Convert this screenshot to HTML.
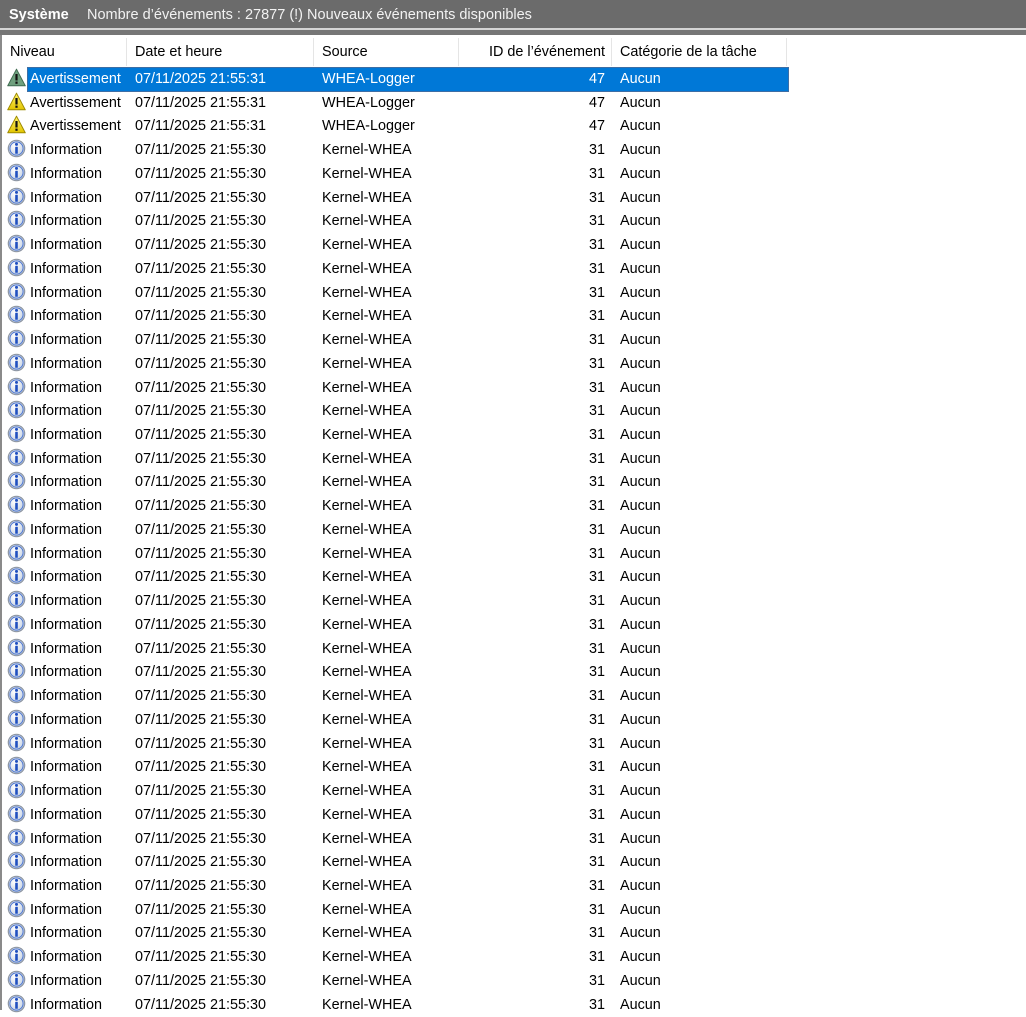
<!DOCTYPE html>
<html><head><meta charset="utf-8"><style>
*{margin:0;padding:0;box-sizing:border-box}
body{width:1026px;height:1010px;overflow:hidden;background:#fff;font-family:"Liberation Sans",sans-serif;font-size:14.4px;color:#000;position:relative}
#bar{position:absolute;left:0;top:0;width:1026px;height:28px;background:#6b6b6b;color:#fff;line-height:30px;font-size:14.5px}
#bar b{position:absolute;left:9px}
#bar span{position:absolute;left:87px;color:#f2f2f2}
#l1{position:absolute;top:28px;left:0;width:1026px;height:2px;background:#d4d4d4}
#l2{position:absolute;top:30px;left:0;width:1026px;height:5px;background:#767676}
#lb{position:absolute;top:35px;left:0;width:2px;height:975px;background:#8a8a8a}
#hd{position:absolute;top:38px;left:2px;height:28px;width:1024px}
.hc{position:absolute;top:0;height:28px;line-height:29px;border-right:1px solid #e5e5e5;padding-left:8px}
#rows{position:absolute;top:67px;left:2px;width:1024px}
.r{position:relative;height:23.74px;line-height:23.74px;white-space:nowrap}
.r span{position:absolute;top:1px}
.a{left:28px}.d{left:133px}.s{left:320px}.i{left:440px;width:163px;text-align:right}.c{left:618px}
.ic{position:absolute;left:5px;top:1px;width:19px;height:19px}
.sel::before{content:"";position:absolute;left:25px;top:0;width:760px;height:23px;background:#0078d7;border:1px solid #3d6ea5}
.sel span{color:#fff;z-index:1}
</style></head><body>
<div id="bar"><b>Système</b><span>Nombre d’événements : 27877 (!) Nouveaux événements disponibles</span></div>
<div id="l1"></div><div id="l2"></div><div id="lb"></div>
<div id="hd">
<div class="hc" style="left:0;width:125px">Niveau</div>
<div class="hc" style="left:125px;width:187px">Date et heure</div>
<div class="hc" style="left:312px;width:145px">Source</div>
<div class="hc" style="left:457px;width:153px;text-align:right;padding-right:6px">ID de l’événement</div>
<div class="hc" style="left:610px;width:175px">Catégorie de la tâche</div>
</div>
<svg width="0" height="0" style="position:absolute"><defs>
<radialGradient id="gi" cx="40%" cy="35%" r="70%"><stop offset="0" stop-color="#ffffff"/><stop offset="1" stop-color="#c4d0e0"/></radialGradient>
<linearGradient id="gw" x1="0" y1="0" x2="0" y2="1"><stop offset="0" stop-color="#fff36a"/><stop offset="1" stop-color="#e2c400"/></linearGradient>
<symbol id="inf" viewBox="0 0 19 19"><circle cx="9.5" cy="9.5" r="8.8" fill="#8d96a3"/><circle cx="9.5" cy="9.5" r="7.6" fill="url(#gi)"/><circle cx="9.5" cy="9.5" r="6.6" fill="none" stroke="#4a74d0" stroke-width="1"/><circle cx="9.5" cy="5.4" r="1.5" fill="#1f4fc0"/><rect x="8.2" y="7.8" width="2.6" height="7" rx=".6" fill="#1f4fc0"/></symbol>
<symbol id="wrn" viewBox="0 0 19 19"><path d="M9.5 1.2 L18.3 17.8 H0.7 Z" fill="url(#gw)" stroke="#9e8a00" stroke-width="1" stroke-linejoin="round"/><rect x="8.4" y="6" width="2.2" height="6.5" fill="#111"/><rect x="8.4" y="13.6" width="2.2" height="2.2" fill="#111"/></symbol>
<symbol id="wsel" viewBox="0 0 19 19"><path d="M9.5 1.2 L18.3 17.8 H0.7 Z" fill="#6fa07e" stroke="#3f6b50" stroke-width="1" stroke-linejoin="round"/><rect x="8.4" y="6" width="2.2" height="6.5" fill="#111"/><rect x="8.4" y="13.6" width="2.2" height="2.2" fill="#111"/></symbol>
</defs></svg>
<div id="rows">
<div class="r sel"><svg class="ic"><use href="#wsel"/></svg><span class="a">Avertissement</span><span class="d">07/11/2025 21:55:31</span><span class="s">WHEA-Logger</span><span class="i">47</span><span class="c">Aucun</span></div>
<div class="r"><svg class="ic"><use href="#wrn"/></svg><span class="a">Avertissement</span><span class="d">07/11/2025 21:55:31</span><span class="s">WHEA-Logger</span><span class="i">47</span><span class="c">Aucun</span></div>
<div class="r"><svg class="ic"><use href="#wrn"/></svg><span class="a">Avertissement</span><span class="d">07/11/2025 21:55:31</span><span class="s">WHEA-Logger</span><span class="i">47</span><span class="c">Aucun</span></div>
<div class="r"><svg class="ic"><use href="#inf"/></svg><span class="a">Information</span><span class="d">07/11/2025 21:55:30</span><span class="s">Kernel-WHEA</span><span class="i">31</span><span class="c">Aucun</span></div>
<div class="r"><svg class="ic"><use href="#inf"/></svg><span class="a">Information</span><span class="d">07/11/2025 21:55:30</span><span class="s">Kernel-WHEA</span><span class="i">31</span><span class="c">Aucun</span></div>
<div class="r"><svg class="ic"><use href="#inf"/></svg><span class="a">Information</span><span class="d">07/11/2025 21:55:30</span><span class="s">Kernel-WHEA</span><span class="i">31</span><span class="c">Aucun</span></div>
<div class="r"><svg class="ic"><use href="#inf"/></svg><span class="a">Information</span><span class="d">07/11/2025 21:55:30</span><span class="s">Kernel-WHEA</span><span class="i">31</span><span class="c">Aucun</span></div>
<div class="r"><svg class="ic"><use href="#inf"/></svg><span class="a">Information</span><span class="d">07/11/2025 21:55:30</span><span class="s">Kernel-WHEA</span><span class="i">31</span><span class="c">Aucun</span></div>
<div class="r"><svg class="ic"><use href="#inf"/></svg><span class="a">Information</span><span class="d">07/11/2025 21:55:30</span><span class="s">Kernel-WHEA</span><span class="i">31</span><span class="c">Aucun</span></div>
<div class="r"><svg class="ic"><use href="#inf"/></svg><span class="a">Information</span><span class="d">07/11/2025 21:55:30</span><span class="s">Kernel-WHEA</span><span class="i">31</span><span class="c">Aucun</span></div>
<div class="r"><svg class="ic"><use href="#inf"/></svg><span class="a">Information</span><span class="d">07/11/2025 21:55:30</span><span class="s">Kernel-WHEA</span><span class="i">31</span><span class="c">Aucun</span></div>
<div class="r"><svg class="ic"><use href="#inf"/></svg><span class="a">Information</span><span class="d">07/11/2025 21:55:30</span><span class="s">Kernel-WHEA</span><span class="i">31</span><span class="c">Aucun</span></div>
<div class="r"><svg class="ic"><use href="#inf"/></svg><span class="a">Information</span><span class="d">07/11/2025 21:55:30</span><span class="s">Kernel-WHEA</span><span class="i">31</span><span class="c">Aucun</span></div>
<div class="r"><svg class="ic"><use href="#inf"/></svg><span class="a">Information</span><span class="d">07/11/2025 21:55:30</span><span class="s">Kernel-WHEA</span><span class="i">31</span><span class="c">Aucun</span></div>
<div class="r"><svg class="ic"><use href="#inf"/></svg><span class="a">Information</span><span class="d">07/11/2025 21:55:30</span><span class="s">Kernel-WHEA</span><span class="i">31</span><span class="c">Aucun</span></div>
<div class="r"><svg class="ic"><use href="#inf"/></svg><span class="a">Information</span><span class="d">07/11/2025 21:55:30</span><span class="s">Kernel-WHEA</span><span class="i">31</span><span class="c">Aucun</span></div>
<div class="r"><svg class="ic"><use href="#inf"/></svg><span class="a">Information</span><span class="d">07/11/2025 21:55:30</span><span class="s">Kernel-WHEA</span><span class="i">31</span><span class="c">Aucun</span></div>
<div class="r"><svg class="ic"><use href="#inf"/></svg><span class="a">Information</span><span class="d">07/11/2025 21:55:30</span><span class="s">Kernel-WHEA</span><span class="i">31</span><span class="c">Aucun</span></div>
<div class="r"><svg class="ic"><use href="#inf"/></svg><span class="a">Information</span><span class="d">07/11/2025 21:55:30</span><span class="s">Kernel-WHEA</span><span class="i">31</span><span class="c">Aucun</span></div>
<div class="r"><svg class="ic"><use href="#inf"/></svg><span class="a">Information</span><span class="d">07/11/2025 21:55:30</span><span class="s">Kernel-WHEA</span><span class="i">31</span><span class="c">Aucun</span></div>
<div class="r"><svg class="ic"><use href="#inf"/></svg><span class="a">Information</span><span class="d">07/11/2025 21:55:30</span><span class="s">Kernel-WHEA</span><span class="i">31</span><span class="c">Aucun</span></div>
<div class="r"><svg class="ic"><use href="#inf"/></svg><span class="a">Information</span><span class="d">07/11/2025 21:55:30</span><span class="s">Kernel-WHEA</span><span class="i">31</span><span class="c">Aucun</span></div>
<div class="r"><svg class="ic"><use href="#inf"/></svg><span class="a">Information</span><span class="d">07/11/2025 21:55:30</span><span class="s">Kernel-WHEA</span><span class="i">31</span><span class="c">Aucun</span></div>
<div class="r"><svg class="ic"><use href="#inf"/></svg><span class="a">Information</span><span class="d">07/11/2025 21:55:30</span><span class="s">Kernel-WHEA</span><span class="i">31</span><span class="c">Aucun</span></div>
<div class="r"><svg class="ic"><use href="#inf"/></svg><span class="a">Information</span><span class="d">07/11/2025 21:55:30</span><span class="s">Kernel-WHEA</span><span class="i">31</span><span class="c">Aucun</span></div>
<div class="r"><svg class="ic"><use href="#inf"/></svg><span class="a">Information</span><span class="d">07/11/2025 21:55:30</span><span class="s">Kernel-WHEA</span><span class="i">31</span><span class="c">Aucun</span></div>
<div class="r"><svg class="ic"><use href="#inf"/></svg><span class="a">Information</span><span class="d">07/11/2025 21:55:30</span><span class="s">Kernel-WHEA</span><span class="i">31</span><span class="c">Aucun</span></div>
<div class="r"><svg class="ic"><use href="#inf"/></svg><span class="a">Information</span><span class="d">07/11/2025 21:55:30</span><span class="s">Kernel-WHEA</span><span class="i">31</span><span class="c">Aucun</span></div>
<div class="r"><svg class="ic"><use href="#inf"/></svg><span class="a">Information</span><span class="d">07/11/2025 21:55:30</span><span class="s">Kernel-WHEA</span><span class="i">31</span><span class="c">Aucun</span></div>
<div class="r"><svg class="ic"><use href="#inf"/></svg><span class="a">Information</span><span class="d">07/11/2025 21:55:30</span><span class="s">Kernel-WHEA</span><span class="i">31</span><span class="c">Aucun</span></div>
<div class="r"><svg class="ic"><use href="#inf"/></svg><span class="a">Information</span><span class="d">07/11/2025 21:55:30</span><span class="s">Kernel-WHEA</span><span class="i">31</span><span class="c">Aucun</span></div>
<div class="r"><svg class="ic"><use href="#inf"/></svg><span class="a">Information</span><span class="d">07/11/2025 21:55:30</span><span class="s">Kernel-WHEA</span><span class="i">31</span><span class="c">Aucun</span></div>
<div class="r"><svg class="ic"><use href="#inf"/></svg><span class="a">Information</span><span class="d">07/11/2025 21:55:30</span><span class="s">Kernel-WHEA</span><span class="i">31</span><span class="c">Aucun</span></div>
<div class="r"><svg class="ic"><use href="#inf"/></svg><span class="a">Information</span><span class="d">07/11/2025 21:55:30</span><span class="s">Kernel-WHEA</span><span class="i">31</span><span class="c">Aucun</span></div>
<div class="r"><svg class="ic"><use href="#inf"/></svg><span class="a">Information</span><span class="d">07/11/2025 21:55:30</span><span class="s">Kernel-WHEA</span><span class="i">31</span><span class="c">Aucun</span></div>
<div class="r"><svg class="ic"><use href="#inf"/></svg><span class="a">Information</span><span class="d">07/11/2025 21:55:30</span><span class="s">Kernel-WHEA</span><span class="i">31</span><span class="c">Aucun</span></div>
<div class="r"><svg class="ic"><use href="#inf"/></svg><span class="a">Information</span><span class="d">07/11/2025 21:55:30</span><span class="s">Kernel-WHEA</span><span class="i">31</span><span class="c">Aucun</span></div>
<div class="r"><svg class="ic"><use href="#inf"/></svg><span class="a">Information</span><span class="d">07/11/2025 21:55:30</span><span class="s">Kernel-WHEA</span><span class="i">31</span><span class="c">Aucun</span></div>
<div class="r"><svg class="ic"><use href="#inf"/></svg><span class="a">Information</span><span class="d">07/11/2025 21:55:30</span><span class="s">Kernel-WHEA</span><span class="i">31</span><span class="c">Aucun</span></div>
<div class="r"><svg class="ic"><use href="#inf"/></svg><span class="a">Information</span><span class="d">07/11/2025 21:55:30</span><span class="s">Kernel-WHEA</span><span class="i">31</span><span class="c">Aucun</span></div>
</div>
</body></html>
